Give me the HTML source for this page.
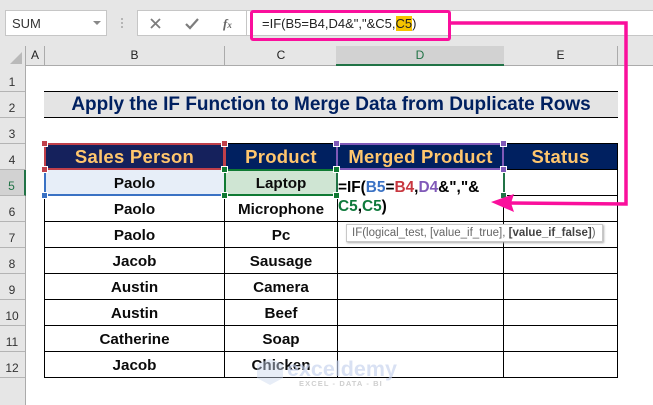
<!DOCTYPE html>
<html><head><meta charset="utf-8">
<style>
html,body{margin:0;padding:0;}
body{width:653px;height:405px;overflow:hidden;position:relative;background:#e6e6e6;font-family:"Liberation Sans",sans-serif;}
div,span.a{position:absolute;box-sizing:border-box;}
.rh{left:0;width:25px;text-align:center;color:#333;font-size:12px;line-height:26px;height:26px;border-bottom:1px solid #b4b4b4;padding-top:3px;padding-right:1px;}
.ch{top:46px;height:19px;text-align:center;font-size:12px;line-height:19px;color:#222;border-right:1px solid #ababab;}
.c{text-align:center;font-weight:bold;font-size:15.2px;line-height:28px;color:#0b0b0b;height:26px;white-space:nowrap;}
.h{text-align:center;font-weight:bold;font-size:18.5px;line-height:26px;color:#ffc66d;top:144px;height:26px;white-space:nowrap;letter-spacing:.25px;}
.l{background:#000;}
.hd{width:5px;height:5px;border:0;}
</style></head><body>
<!-- formula bar -->
<div style="left:0;top:0;width:653px;height:46px;background:#e6e6e6"></div>
<div style="left:5px;top:10px;width:102px;height:26px;background:#fff;border:1px solid #c6c6c6"></div>
<div style="left:12px;top:10px;height:26px;line-height:27px;font-size:13px;color:#333">SUM</div>
<div style="left:93px;top:21px;width:0;height:0;border-left:4px solid transparent;border-right:4px solid transparent;border-top:4px solid #888"></div>
<div style="left:121px;top:18px;width:2px;height:2px;background:#b5b5b5"></div>
<div style="left:121px;top:22px;width:2px;height:2px;background:#b5b5b5"></div>
<div style="left:121px;top:26px;width:2px;height:2px;background:#b5b5b5"></div>
<div style="left:137px;top:10px;width:110px;height:26px;background:#fff;border:1px solid #c6c6c6"></div>
<svg style="position:absolute;left:0;top:0" width="653" height="46">
<path d="M151 19l9 9M160 19l-9 9" stroke="#7d7d7d" stroke-width="1.8" fill="none"/>
<path d="M186 24l4 4 8-9" stroke="#7d7d7d" stroke-width="2.2" fill="none"/>
</svg>
<div style="left:223px;top:16px;font:italic bold 13px 'Liberation Serif',serif;color:#666">f<span style="font-size:9px">x</span></div>
<div style="left:247px;top:10px;width:406px;height:26px;background:#fff;border-top:1px solid #c6c6c6;border-bottom:1px solid #c6c6c6"></div>
<div style="left:262px;top:10px;height:26px;line-height:28px;font-size:13px;color:#222;white-space:nowrap">=IF(B5=B4,D4&amp;","&amp;C5,<span style="background:#f5c400">C5</span>)</div>

<!-- sheet -->
<div style="left:25px;top:65px;width:628px;height:340px;background:#fff"></div>
<div style="left:25px;top:46px;width:628px;height:20px;background:#e6e6e6;border-bottom:1px solid #ababab"></div>
<div style="left:0;top:46px;width:26px;height:359px;background:#e6e6e6;border-right:1px solid #ababab"></div>
<div style="left:10px;top:52px;width:0;height:0;border-left:12px solid transparent;border-bottom:12px solid #b9b9b9"></div>
<div class="ch" style="left:26px;width:19px">A</div>
<div class="ch" style="left:45px;width:180px">B</div>
<div class="ch" style="left:225px;width:113px">C</div>
<div class="ch" style="background:#d2d2d2;color:#217346;left:336px;width:168px;border-bottom:2px solid #217346;height:20px;border-right:0">D</div>
<div class="ch" style="left:504px;width:114px">E</div>

<div class="rh" style="top:66px">1</div>
<div class="rh" style="top:92px">2</div>
<div class="rh" style="top:118px">3</div>
<div class="rh" style="top:144px">4</div>
<div class="rh" style="top:170px;background:#d2d2d2;color:#217346;width:26px;border-right:2px solid #217346">5</div>
<div class="rh" style="top:196px">6</div>
<div class="rh" style="top:222px">7</div>
<div class="rh" style="top:248px">8</div>
<div class="rh" style="top:274px">9</div>
<div class="rh" style="top:300px">10</div>
<div class="rh" style="top:326px">11</div>
<div class="rh" style="top:352px">12</div>

<!-- title -->
<div style="left:44px;top:91px;width:574px;height:27px;background:#e4e4e4;border-top:1px solid #000;border-bottom:1px solid #000;text-align:center;font-weight:bold;font-size:19px;line-height:26px;color:#002060;white-space:nowrap">Apply the IF Function to Merge Data from Duplicate Rows</div>

<!-- header fills -->
<div style="left:44px;top:143px;width:574px;height:27px;background:#002060"></div>
<div style="left:46px;top:144px;width:178px;height:25px;background:#15215c"></div>
<!-- selected fills -->
<div style="left:45px;top:170px;width:179px;height:25px;background:#e7eef8"></div>
<div style="left:225px;top:170px;width:112px;height:25px;background:#cfe5d3"></div>

<!-- grid lines -->
<div class="l" style="left:44px;top:143px;width:1px;height:235px"></div>
<div class="l" style="left:224px;top:143px;width:1px;height:235px"></div>
<div class="l" style="left:337px;top:143px;width:1px;height:235px"></div>
<div class="l" style="left:503px;top:143px;width:1px;height:235px"></div>
<div class="l" style="left:617px;top:143px;width:1px;height:235px"></div>
<div class="l" style="left:44px;top:143px;width:574px;height:1px"></div>
<div class="l" style="left:44px;top:169px;width:574px;height:1px"></div>
<div class="l" style="left:44px;top:195px;width:293px;height:1px"></div>
<div class="l" style="left:503px;top:195px;width:115px;height:1px"></div>
<div class="l" style="left:44px;top:221px;width:574px;height:1px"></div>
<div class="l" style="left:44px;top:247px;width:574px;height:1px"></div>
<div class="l" style="left:44px;top:273px;width:574px;height:1px"></div>
<div class="l" style="left:44px;top:299px;width:574px;height:1px"></div>
<div class="l" style="left:44px;top:325px;width:574px;height:1px"></div>
<div class="l" style="left:44px;top:351px;width:574px;height:1px"></div>
<div class="l" style="left:44px;top:377px;width:574px;height:1px"></div>

<!-- headers -->
<div class="h" style="left:45px;width:179px">Sales Person</div>
<div class="h" style="left:225px;width:112px">Product</div>
<div class="h" style="left:338px;width:165px">Merged Product</div>
<div class="h" style="left:504px;width:113px">Status</div>

<!-- body -->
<div class="c" style="left:45px;width:179px;top:170px">Paolo</div>
<div class="c" style="left:225px;width:112px;top:170px">Laptop</div>
<div class="c" style="left:45px;width:179px;top:196px">Paolo</div>
<div class="c" style="left:225px;width:112px;top:196px">Microphone</div>
<div class="c" style="left:45px;width:179px;top:222px">Paolo</div>
<div class="c" style="left:225px;width:112px;top:222px">Pc</div>
<div class="c" style="left:45px;width:179px;top:248px">Jacob</div>
<div class="c" style="left:225px;width:112px;top:248px">Sausage</div>
<div class="c" style="left:45px;width:179px;top:274px">Austin</div>
<div class="c" style="left:225px;width:112px;top:274px">Camera</div>
<div class="c" style="left:45px;width:179px;top:300px">Austin</div>
<div class="c" style="left:225px;width:112px;top:300px">Beef</div>
<div class="c" style="left:45px;width:179px;top:326px">Catherine</div>
<div class="c" style="left:225px;width:112px;top:326px">Soap</div>
<div class="c" style="left:45px;width:179px;top:352px">Jacob</div>
<div class="c" style="left:225px;width:112px;top:352px">Chicken</div>

<!-- formula in cell -->
<div style="left:338px;top:178px;font-weight:bold;font-size:15.4px;line-height:19px;color:#000;white-space:nowrap">=IF(<span style="color:#3a72c4">B5</span>=<span style="color:#c8373f">B4</span>,<span style="color:#8059b8">D4</span>&amp;","&amp;<br><span style="color:#0f7a3c">C5</span>,<span style="color:#0f7a3c">C5</span>)</div>

<!-- tooltip -->
<div style="left:346px;top:224px;width:257px;height:18px;background:#fff;border:1px solid #c8c8c8;box-shadow:1px 1px 2px #aaa;font-size:11.5px;line-height:16px;color:#666;padding-left:5px;white-space:nowrap">IF(logical_test, [value_if_true], <b style="color:#444">[value_if_false]</b>)</div>

<!-- range selection outlines -->
<div style="left:44px;top:143px;width:181px;height:27px;border:2px solid #c0404a"></div>
<div style="left:224px;top:143px;width:0;height:27px;border-left:2px solid #c0404a"></div>
<div style="left:336px;top:143px;width:168px;height:27px;border:2px solid #8059b8"></div>
<div style="left:224px;top:169px;width:114px;height:27px;border:2px solid #0f7a33"></div>
<div style="left:44px;top:170px;width:180px;height:26px;border:2px solid #3a72c4;border-top:0;border-right:0"></div>
<div style="left:336px;top:170px;width:2px;height:26px;background:#217346"></div>
<div style="left:503px;top:170px;width:2px;height:26px;background:#217346"></div>

<!-- handles -->
<div class="hd" style="left:42px;top:141px;background:#c0404a;outline:1px solid #fff"></div>
<div class="hd" style="left:222px;top:141px;background:#c0404a;outline:1px solid #fff"></div>
<div class="hd" style="left:42px;top:167px;background:#c0404a;outline:1px solid #fff"></div>
<div class="hd" style="left:222px;top:167px;background:#0f7a33;outline:1px solid #fff"></div>
<div class="hd" style="left:42px;top:193px;background:#3a72c4;outline:1px solid #fff"></div>
<div class="hd" style="left:222px;top:193px;background:#0f7a33;outline:1px solid #fff"></div>
<div class="hd" style="left:334px;top:141px;background:#8059b8;outline:1px solid #fff"></div>
<div class="hd" style="left:501px;top:141px;background:#8059b8;outline:1px solid #fff"></div>
<div class="hd" style="left:334px;top:167px;background:#0f7a33;outline:1px solid #fff"></div>
<div class="hd" style="left:501px;top:167px;background:#8059b8;outline:1px solid #fff"></div>
<div class="hd" style="left:334px;top:193px;background:#0f7a33;outline:1px solid #fff"></div>
<div class="hd" style="left:501px;top:193px;background:#217346;outline:1px solid #fff"></div>

<!-- watermark -->
<svg style="position:absolute;left:255px;top:358px" width="30" height="30"><path d="M2 6l13-5 13 5v14l-13 7-13-7z" fill="#c9d6ee" opacity=".45"/></svg>
<div style="left:287px;top:357px;font-weight:bold;font-size:21.5px;line-height:24px;color:#c5d2ee;opacity:.65;white-space:nowrap">exceldemy</div>
<div style="left:299px;top:379px;font-size:7.5px;line-height:10px;color:#cfcfcf;letter-spacing:1.1px;font-weight:bold;white-space:nowrap">EXCEL - DATA - BI</div>

<!-- pink callout -->
<div style="left:250px;top:10px;width:201px;height:31px;border:3px solid #fa0f9c;border-radius:3px"></div>
<svg style="position:absolute;left:0;top:0" width="653" height="405">
<path d="M451 23H626V204L510 203" fill="none" stroke="#fa0f9c" stroke-width="3.5"/>
<path d="M491 202L514 194L511 203L514 212Z" fill="#fa0f9c"/>
</svg>
</body></html>
